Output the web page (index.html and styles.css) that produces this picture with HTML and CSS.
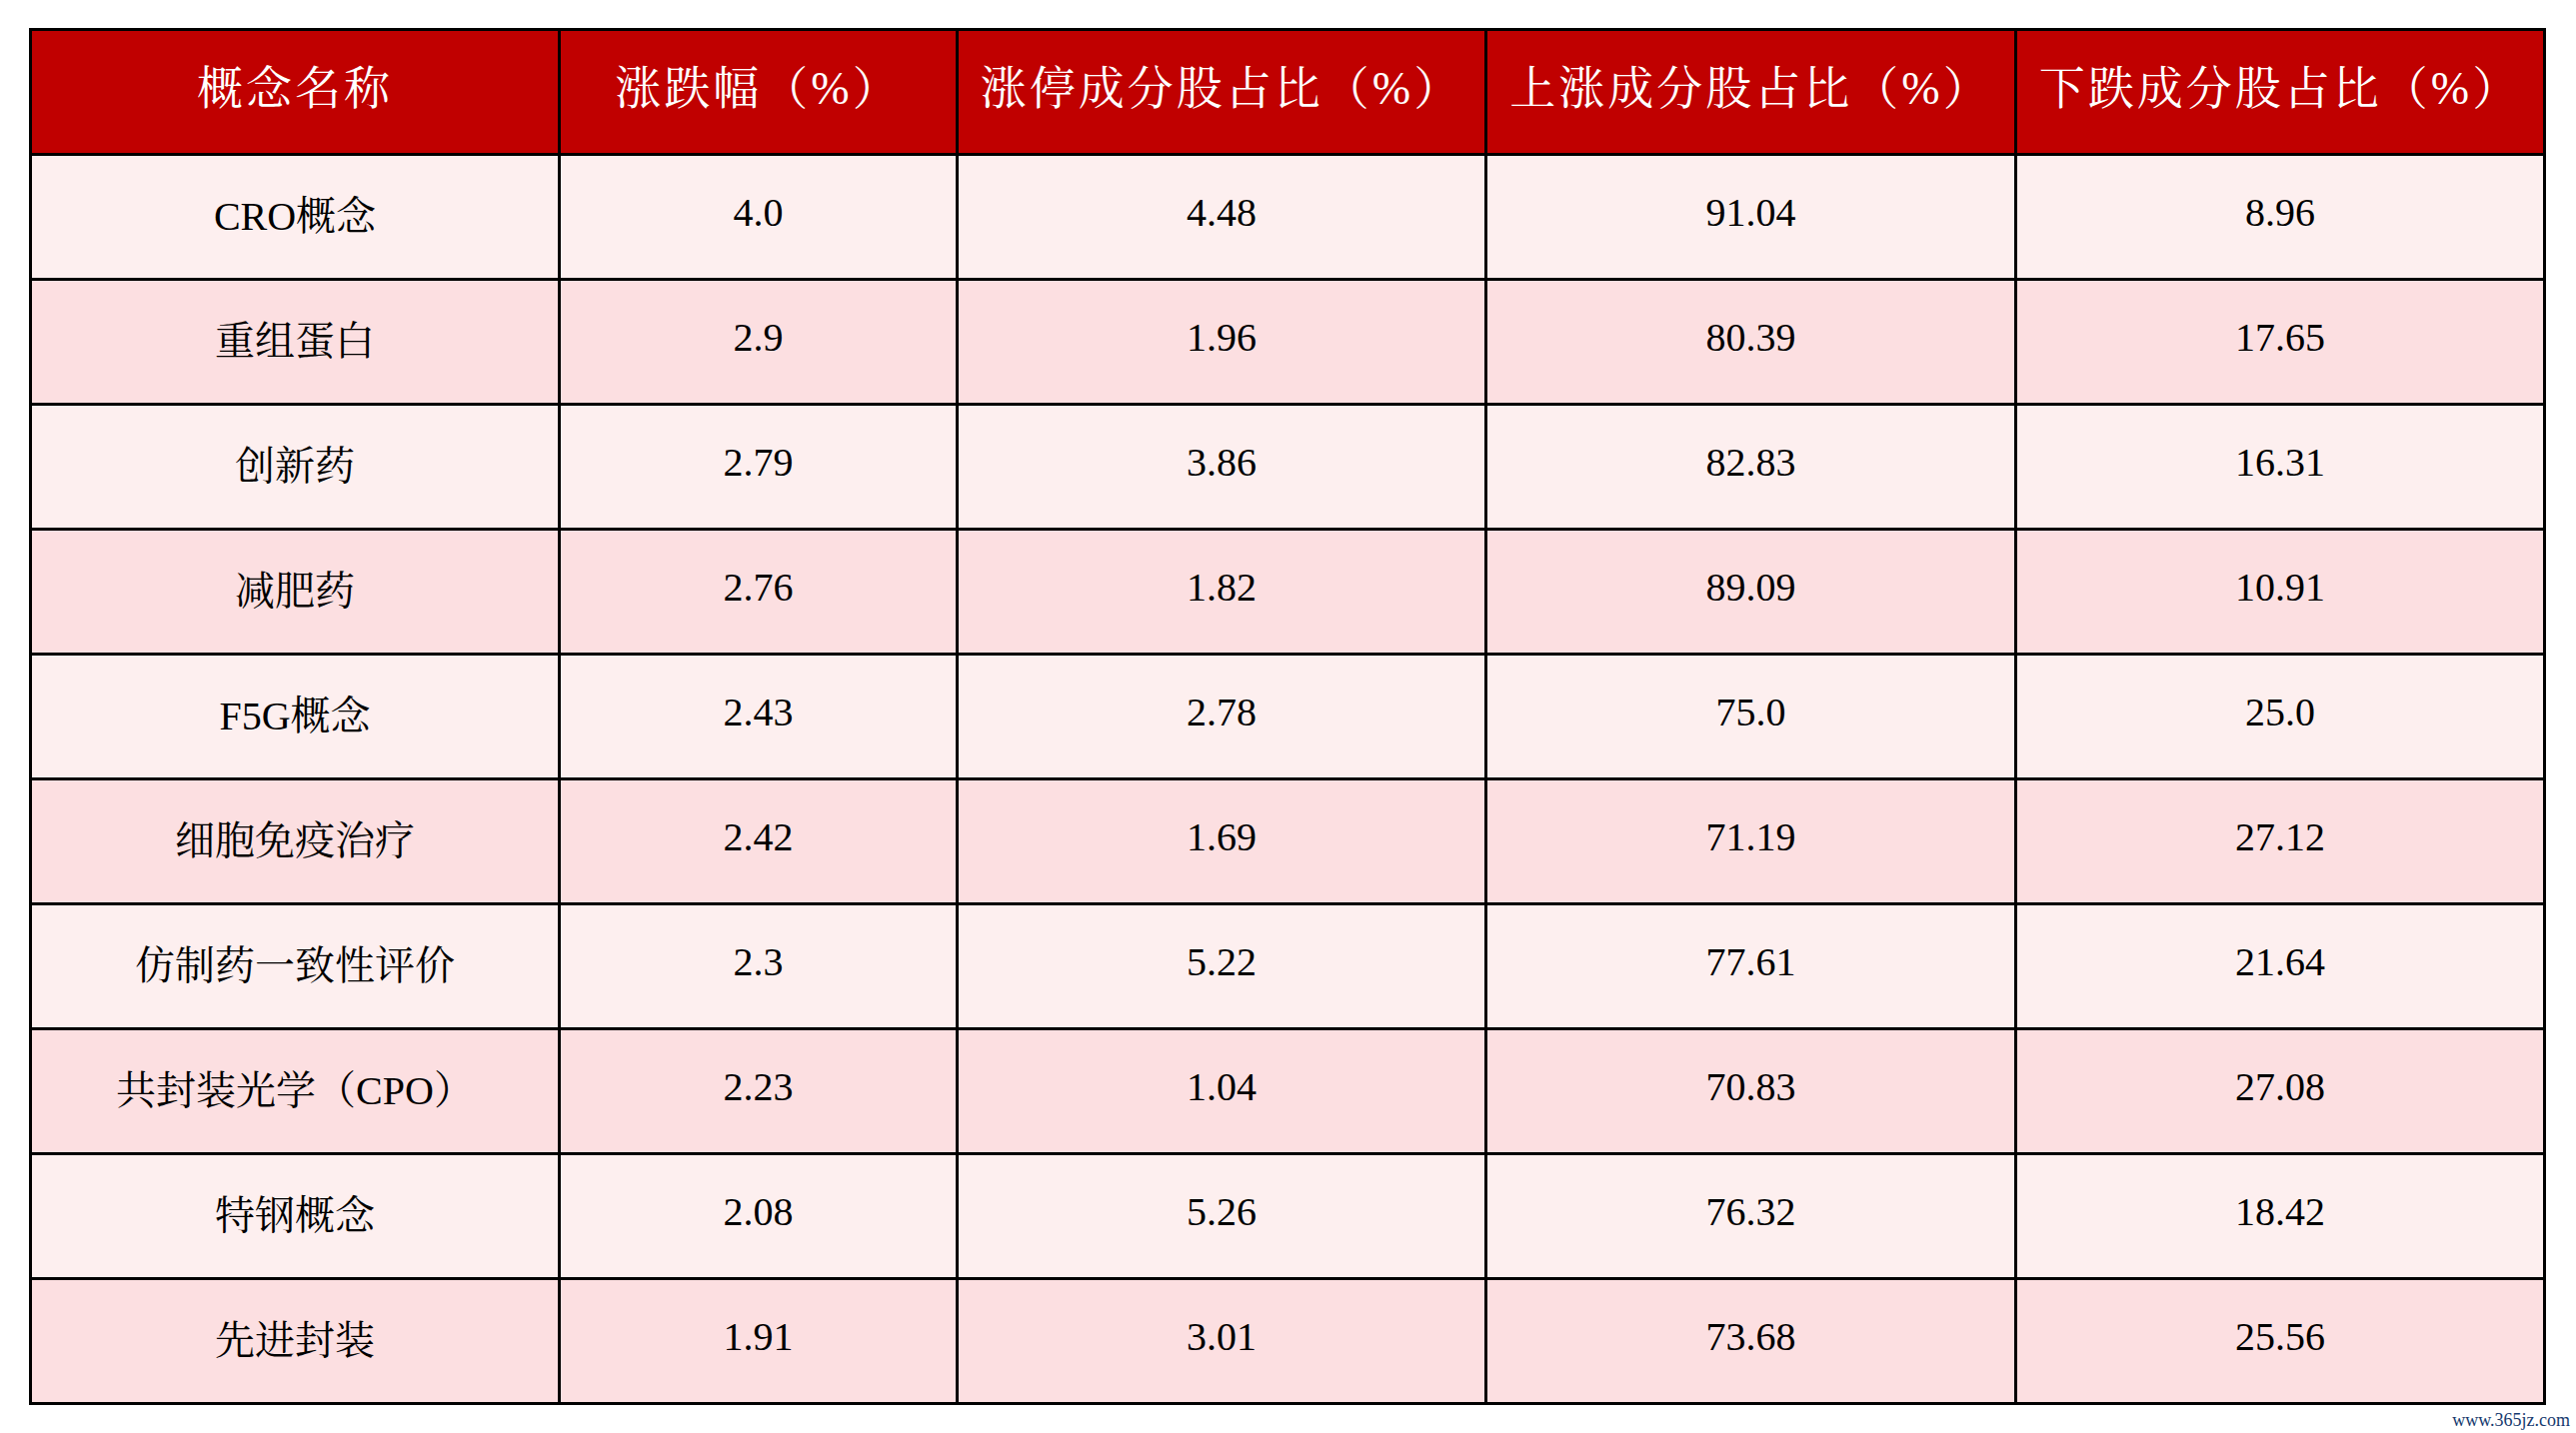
FILE: index.html
```html
<!DOCTYPE html>
<html lang="zh-CN">
<head>
<meta charset="utf-8">
<title>概念板块涨跌统计</title>
<link rel="stylesheet" href="styles.css">
</head>
<body>
<div class="page">
  <table class="grid">
    <thead>
      <tr>
        <th class="c1">概念名称</th>
        <th class="c2">涨跌幅（%）</th>
        <th class="c3">涨停成分股占比（%）</th>
        <th class="c4">上涨成分股占比（%）</th>
        <th class="c5">下跌成分股占比（%）</th>
      </tr>
    </thead>
    <tbody>
      <tr><td>CRO概念</td><td>4.0</td><td>4.48</td><td>91.04</td><td>8.96</td></tr>
      <tr><td>重组蛋白</td><td>2.9</td><td>1.96</td><td>80.39</td><td>17.65</td></tr>
      <tr><td>创新药</td><td>2.79</td><td>3.86</td><td>82.83</td><td>16.31</td></tr>
      <tr><td>减肥药</td><td>2.76</td><td>1.82</td><td>89.09</td><td>10.91</td></tr>
      <tr><td>F5G概念</td><td>2.43</td><td>2.78</td><td>75.0</td><td>25.0</td></tr>
      <tr><td>细胞免疫治疗</td><td>2.42</td><td>1.69</td><td>71.19</td><td>27.12</td></tr>
      <tr><td>仿制药一致性评价</td><td>2.3</td><td>5.22</td><td>77.61</td><td>21.64</td></tr>
      <tr><td>共封装光学（CPO）</td><td>2.23</td><td>1.04</td><td>70.83</td><td>27.08</td></tr>
      <tr><td>特钢概念</td><td>2.08</td><td>5.26</td><td>76.32</td><td>18.42</td></tr>
      <tr><td>先进封装</td><td>1.91</td><td>3.01</td><td>73.68</td><td>25.56</td></tr>
    </tbody>
  </table>
  <div class="mark">www.365jz.com</div>
</div>
</body>
</html>
```

FILE: styles.css
```css
html, body {
  margin: 0;
  padding: 0;
  background: #ffffff;
}

.page {
  padding: 28px 6px 0 29px;
  font-family: "Liberation Serif", "Noto Serif CJK SC", "Noto Sans CJK SC", serif;
}

.grid {
  box-sizing: border-box;
  width: 2518px;
  table-layout: fixed;
  border-collapse: separate;
  border-spacing: 0;
  border-top: 3px solid #000;
  border-left: 3px solid #000;
}

.grid th,
.grid td {
  box-sizing: border-box;
  height: 125px;
  padding: 0;
  text-align: center;
  vertical-align: middle;
  border-right: 3px solid #000;
  border-bottom: 3px solid #000;
  white-space: nowrap;
}

.grid th {
  background: #c00000;
  color: #ffffff;
  font-weight: normal;
  font-size: 46px;
  letter-spacing: 3px;
  padding-bottom: 16px;
}

.grid td {
  color: #000000;
  font-size: 40px;
  padding-bottom: 10px;
}

.grid .c1 { width: 529px; }
.grid .c2 { width: 398px; }
.grid .c3 { width: 529px; }
.grid .c4 { width: 530px; }
.grid .c5 { width: 529px; }

.grid tbody tr:nth-child(odd) td { background: #fdefef; }
.grid tbody tr:nth-child(even) td { background: #fcdfe1; }

.mark {
  text-align: right;
  margin-top: 5px;
  font-family: "Liberation Serif", serif;
  font-size: 18px;
  line-height: 20px;
  color: #163a6e;
}
```
